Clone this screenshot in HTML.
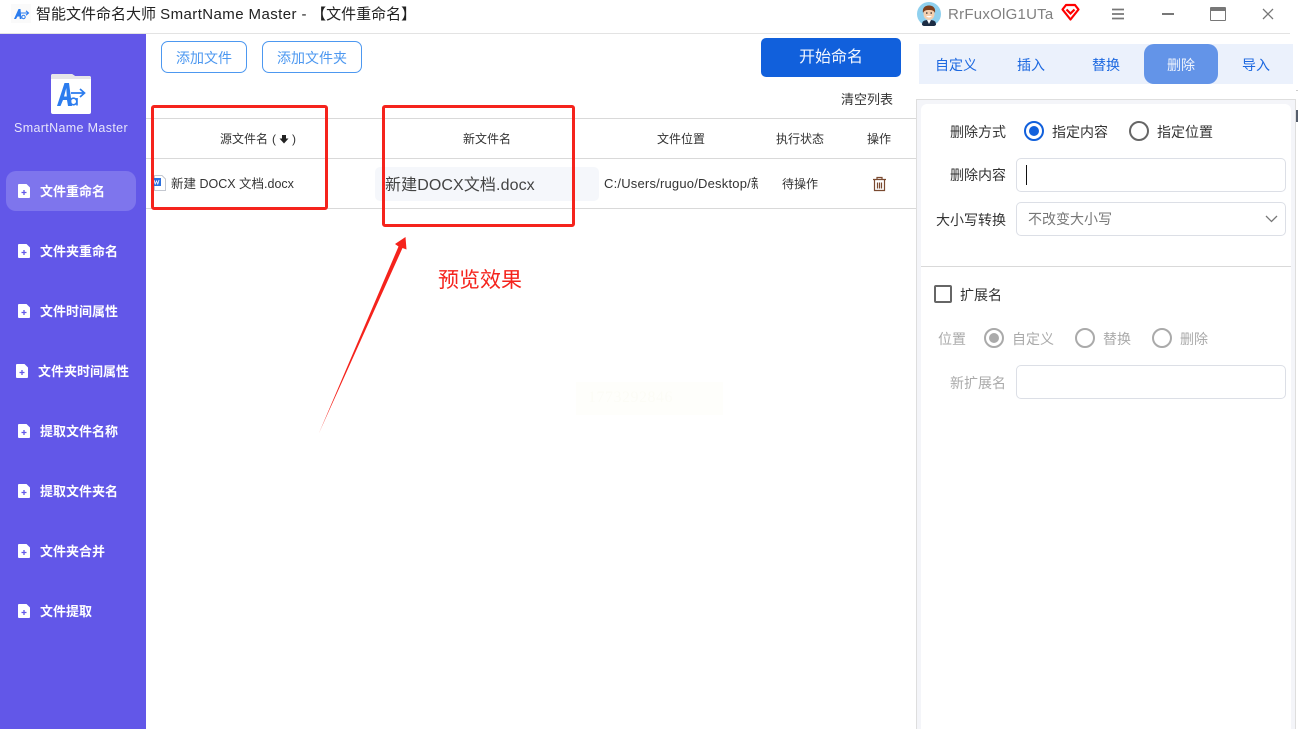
<!DOCTYPE html>
<html lang="zh"><head><meta charset="utf-8"><style>
*{box-sizing:border-box;margin:0;padding:0}
html,body{width:1298px;height:729px;overflow:hidden;background:#fff}
body{position:relative;font-family:"Liberation Sans","Noto Sans CJK SC",sans-serif;color:#333}
.a{position:absolute;white-space:nowrap}
.t{line-height:20px;height:20px}
.c{transform:translateX(-50%)}
.nav{position:absolute;left:40px;color:#fff;font-size:13px;font-weight:700;line-height:20px;white-space:nowrap}
.ic{position:absolute;width:12px;height:14px}
.line{position:absolute;background:#d9d9d9;height:1px}
.red{position:absolute;border:3px solid #f5231c;border-radius:3px}
.btn{position:absolute;border:1px solid #4d98f0;border-radius:7px;color:#4d98f0;font-size:14px;text-align:center;line-height:32px;height:32px;top:41px}
.tab{position:absolute;top:55px;font-size:14px;line-height:20px;color:#1c68e0;white-space:nowrap}
.radio{position:absolute;width:20px;height:20px;border-radius:50%;border:2px solid #666}
.field{position:absolute;border:1px solid #dcdfe6;border-radius:5px;background:#fff}
.lb{font-size:14px;color:#333}
.g{color:#aaa;font-size:14px}
</style></head><body>
<!-- Title bar -->
<svg class="a" style="left:11px;top:4px" width="20" height="19" viewBox="0 0 20 19"><rect width="20" height="19" fill="#fafafa"/><path d="M3 15 7.500 5H9.500L10.500 15H8.800L8.500 12.500H6.500L5 15Z" fill="#2b7cee"/><path d="M10 9H17.500M15 6.800 17.500 9 15 11.200" stroke="#2b7cee" fill="none" stroke-width="1.100"/><circle cx="12.500" cy="13" r="1.700" stroke="#2b7cee" fill="none"/></svg>
<div class="a t" style="left:36px;top:5px;font-size:15px;color:#222">智能文件命名大师 <span style="letter-spacing:.42px">SmartName Master -</span> 【文件重命名】</div>
<div class="line" style="left:0;top:33px;width:1290px;background:#e3e3e3"></div>
<svg class="a" style="left:917px;top:2px" width="24" height="24" viewBox="0 0 24 24"><circle cx="12" cy="12" r="12" fill="#8fd0ee"/><path d="M5 23c0-4 2-5 7-5s7 1 7 5a12 12 0 0 1-14 0Z" fill="#1c2c44"/><path d="M10 18h4l-2 4Z" fill="#fff"/><ellipse cx="12" cy="12" rx="5.500" ry="6" fill="#f5cfae"/><path d="M6 11C5 5 9 3.500 12 3.500S19 5 18 11C17 8.500 15 8 12 8S7 8.500 6 11Z" fill="#7d3f1e"/><path d="M9 14h6q-3 3-6 0Z" fill="#fff"/><circle cx="9.800" cy="11" r=".8" fill="#222"/><circle cx="14.200" cy="11" r=".8" fill="#222"/></svg>
<div class="a t" style="left:948px;top:4.500px;font-size:15px;color:#808080;letter-spacing:.25px">RrFuxOlG1UTa</div>
<svg class="a" style="left:1061px;top:3px" width="19" height="19" viewBox="0 0 19 19"><path d="M5 2h9l3.500 4.500L9.500 16.500 1.500 6.500Z" fill="#fff" stroke="#f00" stroke-width="2.200" stroke-linejoin="round"/><path d="M5.500 6.500 9.500 10.500 13.500 6.500" fill="none" stroke="#f00" stroke-width="2.200"/></svg>
<svg class="a" style="left:1111px;top:8px" width="14" height="12"><path d="M1 1.500H13M1 6H13M1 10.500H13" stroke="#777" stroke-width="1.700"/></svg>
<div class="a" style="left:1162px;top:13px;width:12px;height:2px;background:#777"></div>
<div class="a" style="left:1210px;top:7px;width:16px;height:14px;border:1.500px solid #777;border-top-width:4px;border-radius:1px"></div>
<svg class="a" style="left:1262px;top:8px" width="12" height="12"><path d="M1 1 11 11M11 1 1 11" stroke="#777" stroke-width="1.300"/></svg>

<!-- Sidebar -->
<div class="a" style="left:0;top:34px;width:146px;height:695px;background:#6257e8"></div>
<svg class="a" style="left:51px;top:74px" width="40" height="40" viewBox="0 0 40 40"><path d="M2 0H21L24 2H38Q40 2 40 4V38Q40 40 38 40H2Q0 40 0 38V2Q0 0 2 0Z" fill="#fff"/><path d="M0 5V2Q0 0 2 0H21L24 2H38Q40 2 40 4V5Z" fill="#e6e6e9"/><path d="M6 32 13.500 9H18L21 32H17L16 26H12L9.500 32ZM13 22.500H15.800L15.300 14Z" fill="#2b7cee" fill-rule="evenodd"/><path d="M20 19H33M29 15 33.500 19 29 23" stroke="#2b7cee" fill="none" stroke-width="1.700"/><circle cx="22.500" cy="27.500" r="3.300" stroke="#2b7cee" fill="none" stroke-width="1.600"/><path d="M26 24V31.500" stroke="#2b7cee" stroke-width="1.600"/></svg>
<div class="a t c" style="left:71px;top:118px;font-size:12.500px;color:#e6e4fb;letter-spacing:.35px">SmartName Master</div>
<div class="a" style="left:6px;top:171px;width:130px;height:40px;border-radius:10px;background:#7e75ed"></div>
<svg width="0" height="0" style="position:absolute"><defs><symbol id="f" viewBox="0 0 12 14"><path d="M1 0H8.500L12 3.500V13Q12 14 11 14H1Q0 14 0 13V1Q0 0 1 0Z" fill="#fff"/><path d="M3.500 8.500H8.500M6 6V11" stroke="#6257e8" stroke-width="1.300"/></symbol></defs></svg>
<svg class="ic" style="left:18px;top:184px"><use href="#f"/></svg><div class="nav" style="top:182px">文件重命名</div>
<svg class="ic" style="left:18px;top:244px"><use href="#f"/></svg><div class="nav" style="top:242px">文件夹重命名</div>
<svg class="ic" style="left:18px;top:304px"><use href="#f"/></svg><div class="nav" style="top:302px">文件时间属性</div>
<svg class="ic" style="left:16px;top:364px"><use href="#f"/></svg><div class="nav" style="top:362px;left:38px">文件夹时间属性</div>
<svg class="ic" style="left:18px;top:424px"><use href="#f"/></svg><div class="nav" style="top:422px">提取文件名称</div>
<svg class="ic" style="left:18px;top:484px"><use href="#f"/></svg><div class="nav" style="top:482px">提取文件夹名</div>
<svg class="ic" style="left:18px;top:544px"><use href="#f"/></svg><div class="nav" style="top:542px">文件夹合并</div>
<svg class="ic" style="left:18px;top:604px"><use href="#f"/></svg><div class="nav" style="top:602px">文件提取</div>

<!-- Toolbar -->
<div class="btn" style="left:161px;width:86px">添加文件</div>
<div class="btn" style="left:262px;width:100px">添加文件夹</div>
<div class="a" style="left:761px;top:38px;width:140px;height:39px;background:#1160dc;border-radius:5px;color:#f2f6fe;font-size:16px;line-height:39px;text-align:center">开始命名</div>
<div class="a t" style="left:841px;top:90px;font-size:13px;color:#333">清空列表</div>

<!-- Table -->
<div class="line" style="left:146px;top:118px;width:770px"></div>
<div class="line" style="left:146px;top:158px;width:770px"></div>
<div class="line" style="left:146px;top:208px;width:770px"></div>
<div class="a t" style="left:220px;top:129px;font-size:12px;color:#333">源文件名</div>
<div class="a t" style="left:272px;top:129px;font-size:12px;color:#333">(</div>
<div class="a t" style="left:292px;top:129px;font-size:12px;color:#333">)</div>
<svg class="a" style="left:279px;top:134px" width="10" height="10"><path d="M5 9.500 9.500 4.500H7V1H3V4.500H.5Z" fill="#222"/></svg>
<div class="a t" style="left:463px;top:129px;font-size:12px">新文件名</div>
<div class="a t" style="left:657px;top:129px;font-size:12px">文件位置</div>
<div class="a t" style="left:776px;top:129px;font-size:12px">执行状态</div>
<div class="a t" style="left:867px;top:129px;font-size:12px">操作</div>
<svg class="a" style="left:152px;top:175px" width="14" height="16" viewBox="0 0 14 16"><path d="M2.500.5H10L13.500 4V15.500H2.500Z" fill="#fff" stroke="#c4c8d0"/><rect x="0" y="3" width="9" height="8" fill="#2b6fdc"/><path d="M2 5 3.200 9 4.500 6 5.800 9 7 5" stroke="#fff" fill="none" stroke-width=".8"/></svg>
<div class="a t" style="left:171px;top:174px;font-size:12.500px;color:#333">新建 DOCX 文档.docx</div>
<div class="a" style="left:375px;top:167px;width:224px;height:34px;background:#f5f7fb;border-radius:5px"></div>
<div class="a t" style="left:385px;top:175px;font-size:16px;color:#444;letter-spacing:.1px;line-height:20px;padding-top:1px">新建DOCX文档.docx</div>
<div class="a t" style="left:604px;top:174px;width:154px;overflow:hidden;font-size:13px;letter-spacing:.2px;color:#333">C:/Users/ruguo/Desktop/新建</div>
<div class="a t" style="left:782px;top:174px;font-size:12px">待操作</div>
<svg class="a" style="left:872px;top:176px" width="15" height="16" viewBox="0 0 15 16"><path d="M1 3.500H14M5 3V1.500H10V3M2.500 4V14.500H12.500V4M5.500 6.500V12.500M7.500 6.500V12.500M9.500 6.500V12.500" fill="none" stroke="#7a4a30" stroke-width="1.200"/></svg>

<!-- Annotations -->
<div class="red" style="left:151px;top:105px;width:177px;height:105px"></div>
<div class="red" style="left:382px;top:105px;width:193px;height:122px"></div>
<svg class="a" style="left:0;top:0" width="1298" height="729"><path d="M319 433 398.500 246.500 395 244 405.500 237 406.500 249.500 402.500 248Z" fill="#f5231c"/></svg>
<div class="a" style="left:438px;top:267px;font-size:21px;line-height:28px;color:#f5231c">预览效果</div>
<div class="a" style="left:576px;top:382px;width:147px;height:33px;background:#fefefb"></div>
<div class="a" style="left:588px;top:388px;font:16px/20px 'Liberation Serif',serif;color:#fcfcf6;letter-spacing:.5px">1773292846</div>

<!-- Right tabs -->
<div class="a" style="left:919px;top:44px;width:374px;height:40px;background:#ebf1fc"></div>
<div class="a" style="left:1144px;top:44px;width:74px;height:40px;background:#6394e8;border-radius:10px"></div>
<div class="tab" style="left:935px">自定义</div><div class="tab" style="left:1017px">插入</div><div class="tab" style="left:1092px">替换</div><div class="tab" style="left:1167px;color:#f1f5fd">删除</div><div class="tab" style="left:1242px">导入</div>

<!-- Right panel -->
<div class="a" style="left:916px;top:99px;width:380px;height:640px;border:1px solid #dedede;border-bottom:0;background:#f4f5f9"></div>
<div class="a" style="left:921px;top:104px;width:370px;height:640px;background:#fff;border-radius:6px"></div>
<div class="a" style="left:1296px;top:90px;width:2px;height:1px;background:#ccc"></div>
<div class="a" style="left:1296px;top:110px;width:2px;height:12px;background:#555e6c"></div>
<div class="a t lb" style="left:950px;top:122px">删除方式</div>
<div class="radio" style="left:1024px;top:121px;border-color:#1160dc"></div><div class="a" style="left:1029px;top:126px;width:10px;height:10px;border-radius:50%;background:#1160dc"></div>
<div class="a t" style="left:1052px;top:122px;font-size:14px">指定内容</div>
<div class="radio" style="left:1129px;top:121px"></div>
<div class="a t" style="left:1157px;top:122px;font-size:14px">指定位置</div>
<div class="a t lb" style="left:950px;top:165px">删除内容</div>
<div class="field" style="left:1016px;top:158px;width:270px;height:34px"></div>
<div class="a" style="left:1026px;top:165px;width:1px;height:20px;background:#111"></div>
<div class="a t lb" style="left:936px;top:210px">大小写转换</div>
<div class="field" style="left:1016px;top:202px;width:270px;height:34px"></div>
<div class="a t" style="left:1028px;top:209px;font-size:14px;color:#777">不改变大小写</div>
<svg class="a" style="left:1265px;top:215px" width="13" height="8"><path d="M1 1 6.500 6.500 12 1" fill="none" stroke="#777" stroke-width="1.300"/></svg>
<div class="line" style="left:921px;top:266px;width:370px"></div>
<div class="a" style="left:934px;top:285px;width:18px;height:18px;border:2px solid #666;border-radius:2px"></div>
<div class="a t" style="left:960px;top:285px;font-size:14px">扩展名</div>
<div class="a t g" style="left:938px;top:329px">位置</div>
<div class="radio" style="left:984px;top:328px;border-color:#aaa"></div><div class="a" style="left:989px;top:333px;width:10px;height:10px;border-radius:50%;background:#aaa"></div>
<div class="a t g" style="left:1012px;top:329px">自定义</div>
<div class="radio" style="left:1075px;top:328px;border-color:#aaa"></div>
<div class="a t g" style="left:1103px;top:329px">替换</div>
<div class="radio" style="left:1152px;top:328px;border-color:#aaa"></div>
<div class="a t g" style="left:1180px;top:329px">删除</div>
<div class="a t g" style="left:950px;top:373px">新扩展名</div>
<div class="field" style="left:1016px;top:365px;width:270px;height:34px"></div>
</body></html>
